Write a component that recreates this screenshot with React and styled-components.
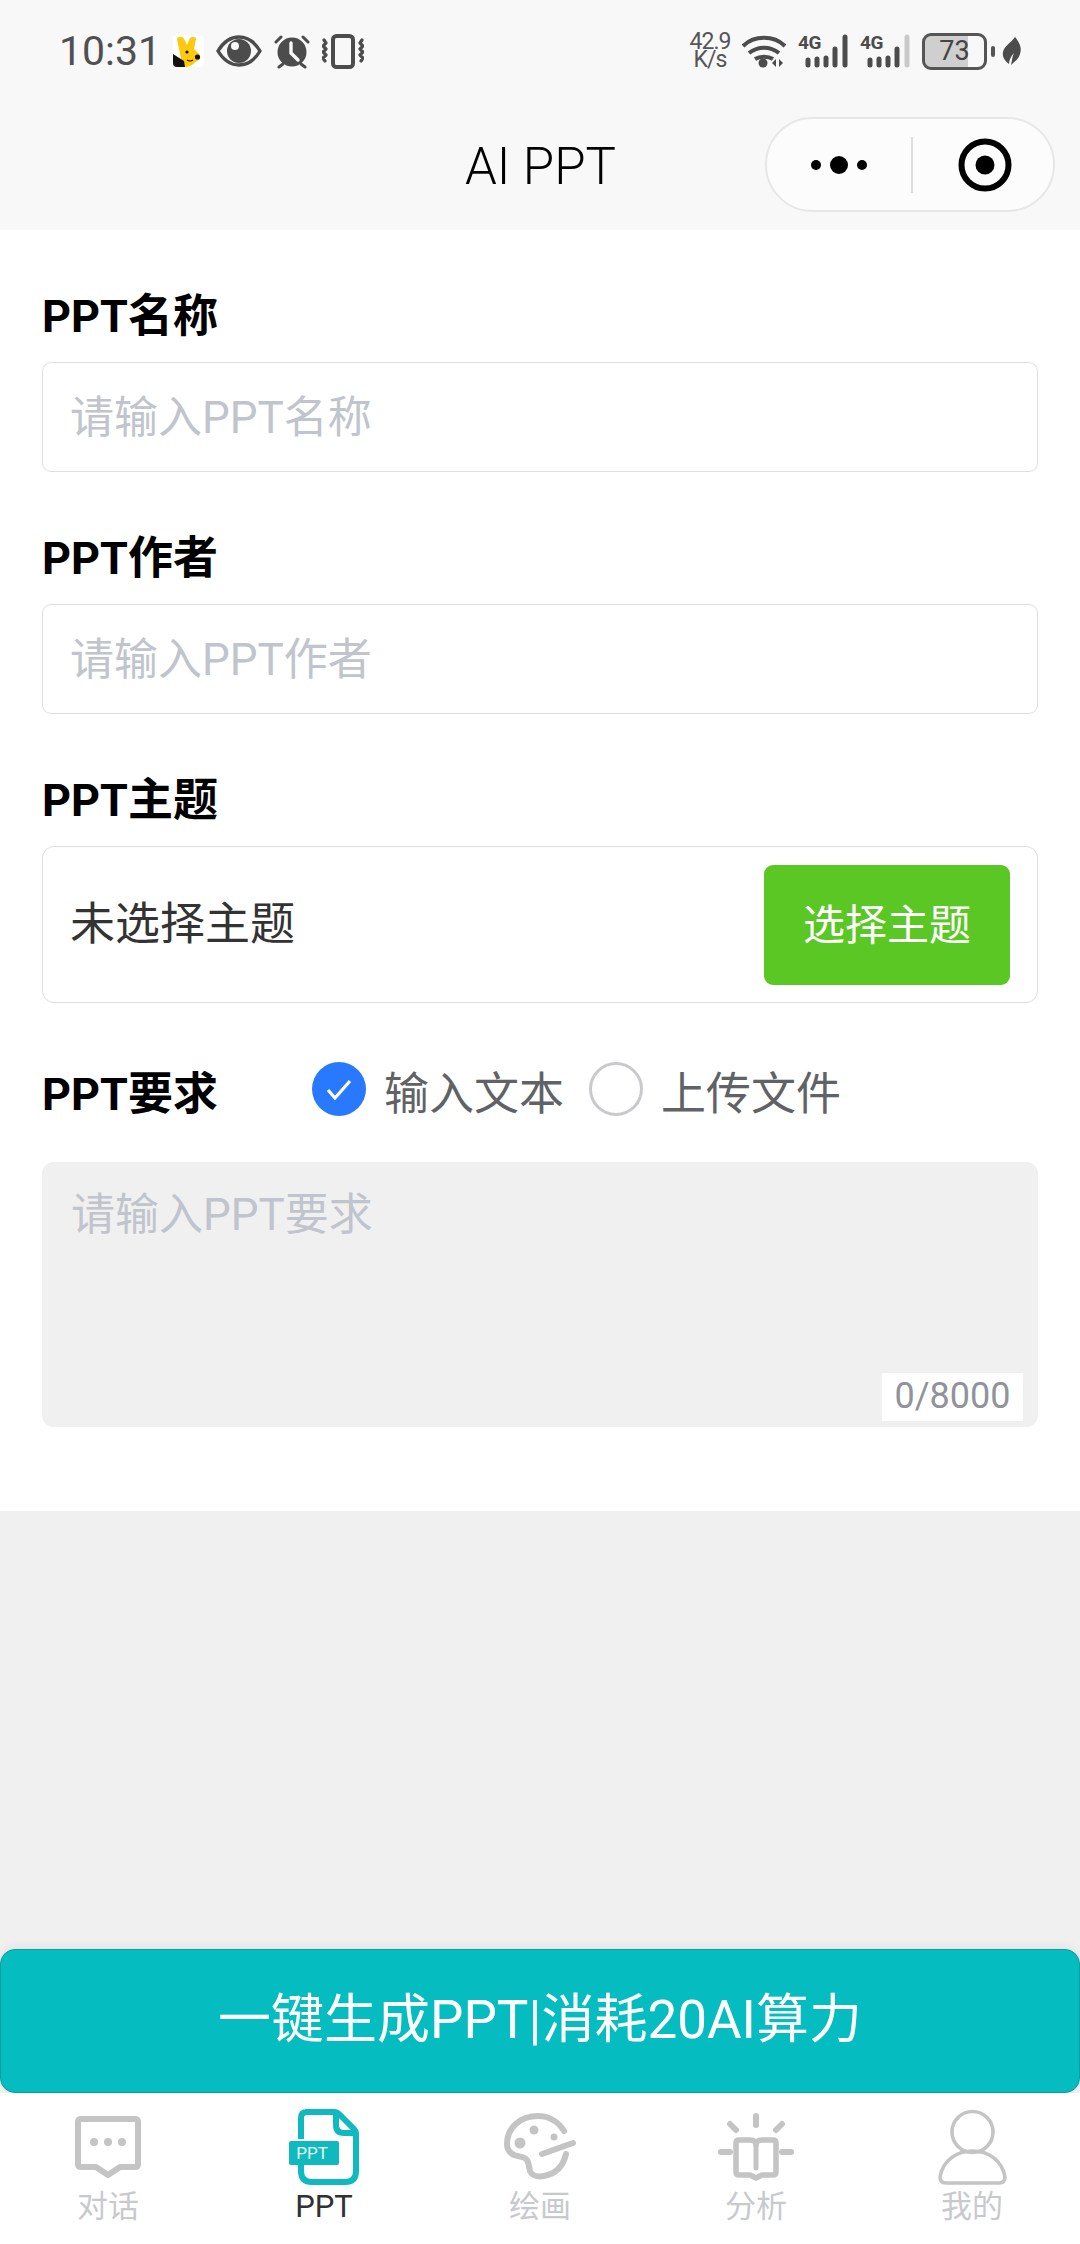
import React from "react";
import styled, { createGlobalStyle } from "styled-components";

const Global = createGlobalStyle`
  html, body { margin: 0; padding: 0; background: #f0f0f0; }
  * { box-sizing: border-box; }
  body { font-family: Roboto, "Noto Sans CJK SC", sans-serif; }
`;
const Page = styled.div`
  width: 1080px; height: 2244px; display: flex; flex-direction: column; background: #f0f0f0; overflow: hidden;
`;
const Header = styled.header`
  height: 230px; background: #f8f8f8; display: flex; flex-direction: column; flex: none;
`;
const StatusBar = styled.div`
  height: 102px; display: flex; align-items: center; justify-content: space-between; padding: 0 58px 0 59px; color: #4c4c4c; flex: none;
`;
const StatusGroup = styled.div`
  display: flex; align-items: center; gap: ${p => p.$gap || 12}px;
`;
const Time = styled.span`
  font-size: 41px; line-height: 1; font-family: Roboto, sans-serif; color: #505050;
`;
const Speed = styled.div`
  width: 40px; display: flex; flex-direction: column; align-items: center; font-size: 23px; line-height: 18px; letter-spacing: -1px; font-weight: 400; color: #555; white-space: nowrap;
`;
const Signal = styled.div`
  position: relative; width: 50px; height: 34px;
`;
const SignalLabel = styled.span`
  position: absolute; left: 0; top: -1px; font-size: 19px; line-height: 19px; font-weight: 700; letter-spacing: -0.5px; color: #4c4c4c;
`;
const Battery = styled.div`
  position: relative; width: 65px; height: 37px; border: 3px solid #555; border-radius: 9px; overflow: hidden; display: flex; align-items: center; justify-content: center; font-size: 27px; color: #444;
  background: linear-gradient(90deg, #cfcfcf 0 73%, transparent 73%);
`;
const BatteryCap = styled.i`
  width: 4px; height: 11px; background: #555; border-radius: 2px; margin: 0 -5px 0 -8px;
`;
const NavBar = styled.div`
  flex: 1; display: grid; grid-template-columns: 1fr auto 1fr; align-items: center; padding: 0 25px 3px 0;
`;
const Title = styled.h1`
  grid-column: 2; margin: 0; font-size: 51px; line-height: 1; font-weight: 300; color: #000; transform: translate(13px, 2px);
`;
const Capsule = styled.div`
  grid-column: 3; justify-self: end; width: 290px; height: 95px; border-radius: 48px; background: #fcfcfc; border: 2px solid #e7e7e7; display: flex; align-items: center;
`;
const CapsuleHalf = styled.div`
  flex: none; width: 144px; height: 100%; display: flex; align-items: center; justify-content: center; gap: ${p => p.$gap || 0}px;
`;
const Dot = styled.i`
  width: ${p => p.$s}px; height: ${p => p.$s}px; border-radius: 50%; background: #000;
`;
const Divider = styled.i`
  width: 2px; height: 56px; background: #dedede; flex: none;
`;
const Form = styled.main`
  background: #fff; padding: 56px 42px 84px 42px; flex: none; height: 1281px; display: flex; flex-direction: column;
`;
const Field = styled.section`
  display: flex; flex-direction: column; margin-bottom: ${p => p.$mb ?? 56}px;
`;
const Label = styled.label`
  height: 60px; line-height: 62px; font-size: 45px; font-weight: 700; color: #000; margin-bottom: ${p => p.$mb ?? 16}px; flex: none;
`;
const InputBox = styled.div`
  height: 110px; border: 1px solid #dcdfe6; border-radius: 9px; padding: 0 27px 7px; display: flex; align-items: center; font-size: 44px; color: #c0c4cc;
`;
const ThemeBox = styled.div`
  height: 157px; border: 1px solid #dcdfe6; border-radius: 12px; padding: 0 27px; display: flex; align-items: center; justify-content: space-between; font-size: 45px; color: #333;
`;
const ThemeText = styled.span`
  padding-bottom: 8px;
`;
const ThemeButton = styled.button`
  width: 246px; height: 120px; border: 0; border-radius: 9px; background: #5ac725; color: #fff; font-size: 42px; font-family: inherit; padding: 0 0 6px;
`;
const ModeRow = styled.div`
  display: flex; align-items: center; height: 60px; margin-bottom: 43px;
`;
const ModeLabel = styled.span`
  font-size: 45px; font-weight: 700; color: #000; width: 270px; flex: none; padding-top: 2px;
`;
const RadioOption = styled.div`
  display: flex; align-items: center; gap: 18px; margin-right: 25px; font-size: 45px; color: #606266;
`;
const RadioText = styled.span`
  padding-top: 2px;
`;
const RadioMark = styled.span`
  width: 54px; height: 54px; border-radius: 50%; display: flex; align-items: center; justify-content: center; flex: none;
  background: ${p => (p.$on ? "#2979ff" : "#fff")}; border: ${p => (p.$on ? "0" : "3px solid #c8c9cc")};
`;
const TextArea = styled.div`
  position: relative; height: 265px; background: #f0f0f0; border-radius: 12px; padding: 28px 29px; font-size: 44px; line-height: 50px; color: #c0c4cc;
`;
const Counter = styled.span`
  position: absolute; right: 15px; bottom: 6px; width: 141px; height: 48px; background: #fff; color: #909399; font-size: 36px; line-height: 46px; text-align: center;
`;
const Spacer = styled.div`
  flex: 1; background: #f0f0f0;
`;
const Generate = styled.button`
  flex: none; height: 144px; width: 1080px; background: #05bcc0; color: #fff; border: 1px solid #0a9ca0; border-radius: 15px; font-size: 53px; font-family: inherit; padding: 0 0 12px; box-shadow: 0 -3px 8px rgba(0,0,0,.06); position: relative;
`;
const TabBar = styled.nav`
  flex: none; height: 151px; background: #fff; display: grid; grid-template-columns: repeat(5, 216px);
`;
const Tab = styled.div`
  display: flex; flex-direction: column; align-items: center; position: relative; padding-top: ${p => p.$pt}px;
  font-size: 31px; line-height: 36px; color: ${p => (p.$on ? "#303133" : "#c8c9cc")};
`;
const TabIconWrap = styled.div`
  height: ${p => p.$h}px; display: flex; align-items: flex-start; margin-bottom: ${p => p.$mb || 0}px; flex: none;
`;

const Bunny = () => (
  <svg width="31" height="32" viewBox="0 0 31 32">
    <rect width="31" height="32" rx="4" fill="#fff" />
    <path d="M4 4q0-2 2-2h3q1 0 2 2l3 6 3-7q1-1 3-1h1q2 0 2 2l-2 10 3 3q4 2 3 7l-3 2-5 4q-3 2-6 2l-3-1-3-12z" fill="#fec90f" />
    <path d="M0 19l11 7 1 6H4q-4 0-4-4z" fill="#111" />
    <circle cx="14" cy="17" r="1.600" fill="#111" /><circle cx="24.500" cy="22" r="2.600" fill="#111" />
    <path d="M14 25q3 2 6 0" stroke="#111" strokeWidth="1.200" fill="none" />
  </svg>
);
const Eye = () => (
  <svg width="46" height="32" viewBox="0 0 46 32">
    <path d="M2 16C8 6 15 2 23 2s15 4 21 14c-6 10-13 14-21 14S8 26 2 16z" fill="none" stroke="#4c4c4c" strokeWidth="3.400" />
    <circle cx="23" cy="16" r="12" fill="#4c4c4c" />
    <circle cx="19" cy="11" r="4" fill="#f8f8f8" />
  </svg>
);
const Alarm = () => (
  <svg width="36" height="35" viewBox="0 0 36 35">
    <circle cx="18" cy="18" r="14.500" fill="#4c4c4c" />
    <path d="M17 9v10l7 7" stroke="#f8f8f8" strokeWidth="3.400" fill="none" strokeLinecap="round" />
    <path d="M2 8l5-5M34 8l-5-5M5 33l4-3M31 33l-4-3" stroke="#4c4c4c" strokeWidth="3" strokeLinecap="round" />
  </svg>
);
const Vibrate = () => (
  <svg width="42" height="35" viewBox="0 0 42 35">
    <rect x="11" y="2" width="20" height="31" rx="3.500" fill="none" stroke="#4c4c4c" strokeWidth="4" />
    <path d="M2 6l2 3-3 3 3 3-3 3 3 3-3 3 2 3M40 6l-2 3 3 3-3 3 3 3-3 3 3 3-2 3" fill="none" stroke="#4c4c4c" strokeWidth="3.200" strokeLinecap="round" strokeLinejoin="round" />
  </svg>
);
const Wifi = () => (
  <svg width="44" height="34" viewBox="0 0 44 34">
    <path d="M1 12c11-11 31-11 42 0M7 19c9-7 21-7 30 0M13 25c5-3 13-3 18 0" fill="none" stroke="#4c4c4c" strokeWidth="4" />
    <circle cx="21" cy="29" r="4.500" fill="#4c4c4c" />
    <path d="M34 25l-4 4 4 4zM37 25l4 4-4 4z" fill="#4c4c4c" />
  </svg>
);
const Bars = ({ faded }) => (
  <svg width="50" height="34" viewBox="0 0 50 34" style={{ position: "absolute", left: 0, top: 0 }}>
    <g strokeWidth="5" strokeLinecap="round" stroke="#4c4c4c">
      <path d="M10 26v5M19 25v6M28 24v7M37 15v16" />
      <path d="M47 3v28" stroke={faded ? "#c9c9c9" : "#4c4c4c"} />
    </g>
  </svg>
);
const Leaf = () => (
  <svg width="20" height="30" viewBox="0 0 20 30">
    <path d="M13 1c5 6 7 11 5 17-1 5-6 8-9 11 1-4 1-8 3-12-3 3-5 7-5 11-4-3-7-7-6-12C2 10 9 7 13 1z" fill="#4c4c4c" />
  </svg>
);
const Target = () => (
  <svg width="54" height="54" viewBox="0 0 54 54">
    <circle cx="27" cy="27" r="23.500" fill="none" stroke="#000" strokeWidth="6" />
    <circle cx="27" cy="27" r="9.500" fill="#000" />
  </svg>
);
const Check = () => (
  <svg width="26" height="21" viewBox="0 0 26 21">
    <path d="M2 11l7 8L24 2" fill="none" stroke="#fff" strokeWidth="3.200" />
  </svg>
);
const grey = "#c4c4c4";
const ChatIcon = () => (
  <svg width="66" height="62" viewBox="0 0 66 62">
    <path d="M6 3h54q3 0 3 3v42q0 3-3 3H45L33 59 21 51H6q-3 0-3-3V6q0-3 3-3z" fill="none" stroke={grey} strokeWidth="6" strokeLinejoin="round" />
    <circle cx="19" cy="26" r="4" fill={grey} /><circle cx="33" cy="26" r="4" fill={grey} /><circle cx="47" cy="26" r="4" fill={grey} />
  </svg>
);
const PptIcon = () => (
  <svg width="70" height="76" viewBox="0 0 70 76">
    <path d="M16 3h30q2 0 4 2l15 15q2 2 2 4v38q0 11-11 11H23q-11 0-11-11V55M12 30V9q0-6 6-6" fill="none" stroke="#0fb9bd" strokeWidth="6" />
    <path d="M47 4v12q0 8 8 8h11" fill="none" stroke="#0fb9bd" strokeWidth="6" />
    <rect x="0" y="32" width="50" height="24" rx="2" fill="#0fb9bd" />
    <text x="23" y="50" textAnchor="middle" fontSize="17" fill="#e6ffff" fontFamily="Roboto, sans-serif">PPT</text>
  </svg>
);
const PaletteIcon = () => (
  <svg width="72" height="67" viewBox="0 0 72 67">
    <path d="M60 18C54 8 44 3 34 3 16 3 3 15 3 31c0 5 3 9 7 11 5 2 10 1 13 5 2 3 2 8 3 11 2 5 8 6 14 5 11-2 19-9 22-22" fill="none" stroke={grey} strokeWidth="6" strokeLinecap="round" />
    <path d="M38 41l31-11" stroke={grey} strokeWidth="6" strokeLinecap="round" />
    <circle cx="16" cy="30" r="5.500" fill={grey} /><circle cx="30" cy="17" r="4.500" fill={grey} /><circle cx="50" cy="24" r="3.500" fill={grey} />
  </svg>
);
const BookIcon = () => (
  <svg width="76" height="68" viewBox="0 0 76 68">
    <path d="M38 3v9M12 11l6 6M64 11l-6 6M3 39h9M64 39h9" stroke={grey} strokeWidth="6" strokeLinecap="round" />
    <path d="M18 30q0-3 3-3h11q6 0 6 5 0-5 6-5h11q3 0 3 3v29q0 3-3 3H44l-6 3-6-3H21q-3 0-3-3z" fill="none" stroke={grey} strokeWidth="5.500" strokeLinejoin="round" />
    <path d="M38 33v22" stroke={grey} strokeWidth="5" strokeLinecap="round" />
  </svg>
);
const UserIcon = () => (
  <svg width="69" height="76" viewBox="0 0 69 76">
    <circle cx="34.500" cy="23" r="20.500" fill="none" stroke={grey} strokeWidth="3.600" />
    <path d="M8 74h53q6 0 6-6C64 51 50 42 34.500 42 19 42 5 51 2 68q0 6 6 6z" fill="none" stroke={grey} strokeWidth="3.600" />
  </svg>
);

export default function App() {
  return (
    <Page>
      <Global />
      <Header>
        <StatusBar>
          <StatusGroup>
            <Time>10:31</Time>
            <Bunny />
            <Eye />
            <Alarm />
            <Vibrate />
          </StatusGroup>
          <StatusGroup>
            <Speed><span>42.9</span><span>K/s</span></Speed>
            <Wifi />
            <Signal><Bars /><SignalLabel>4G</SignalLabel></Signal>
            <Signal><Bars faded /><SignalLabel>4G</SignalLabel></Signal>
            <Battery>73</Battery>
            <BatteryCap />
            <Leaf />
          </StatusGroup>
        </StatusBar>
        <NavBar>
          <Title>AI PPT</Title>
          <Capsule>
            <CapsuleHalf $gap={9}>
              <Dot $s={10} /><Dot $s={18} /><Dot $s={10} />
            </CapsuleHalf>
            <Divider />
            <CapsuleHalf><Target /></CapsuleHalf>
          </Capsule>
        </NavBar>
      </Header>
      <Form>
        <Field>
          <Label>PPT名称</Label>
          <InputBox>请输入PPT名称</InputBox>
        </Field>
        <Field>
          <Label>PPT作者</Label>
          <InputBox>请输入PPT作者</InputBox>
        </Field>
        <Field>
          <Label>PPT主题</Label>
          <ThemeBox>
            <ThemeText>未选择主题</ThemeText>
            <ThemeButton>选择主题</ThemeButton>
          </ThemeBox>
        </Field>
        <Field $mb={0}>
          <ModeRow>
            <ModeLabel>PPT要求</ModeLabel>
            <RadioOption><RadioMark $on><Check /></RadioMark><RadioText>输入文本</RadioText></RadioOption>
            <RadioOption><RadioMark /><RadioText>上传文件</RadioText></RadioOption>
          </ModeRow>
          <TextArea>
            请输入PPT要求
            <Counter>0/8000</Counter>
          </TextArea>
        </Field>
      </Form>
      <Spacer />
      <Generate>一键生成PPT|消耗20AI算力</Generate>
      <TabBar>
        <Tab $pt={23}><TabIconWrap $h={63} $mb={10}><ChatIcon /></TabIconWrap>对话</Tab>
        <Tab $pt={16} $on><TabIconWrap $h={76} $mb={4}><PptIcon /></TabIconWrap>PPT</Tab>
        <Tab $pt={20}><TabIconWrap $h={67} $mb={9}><PaletteIcon /></TabIconWrap>绘画</Tab>
        <Tab $pt={20}><TabIconWrap $h={68} $mb={8}><BookIcon /></TabIconWrap>分析</Tab>
        <Tab $pt={16}><TabIconWrap $h={76} $mb={4}><UserIcon /></TabIconWrap>我的</Tab>
      </TabBar>
    </Page>
  );
}
